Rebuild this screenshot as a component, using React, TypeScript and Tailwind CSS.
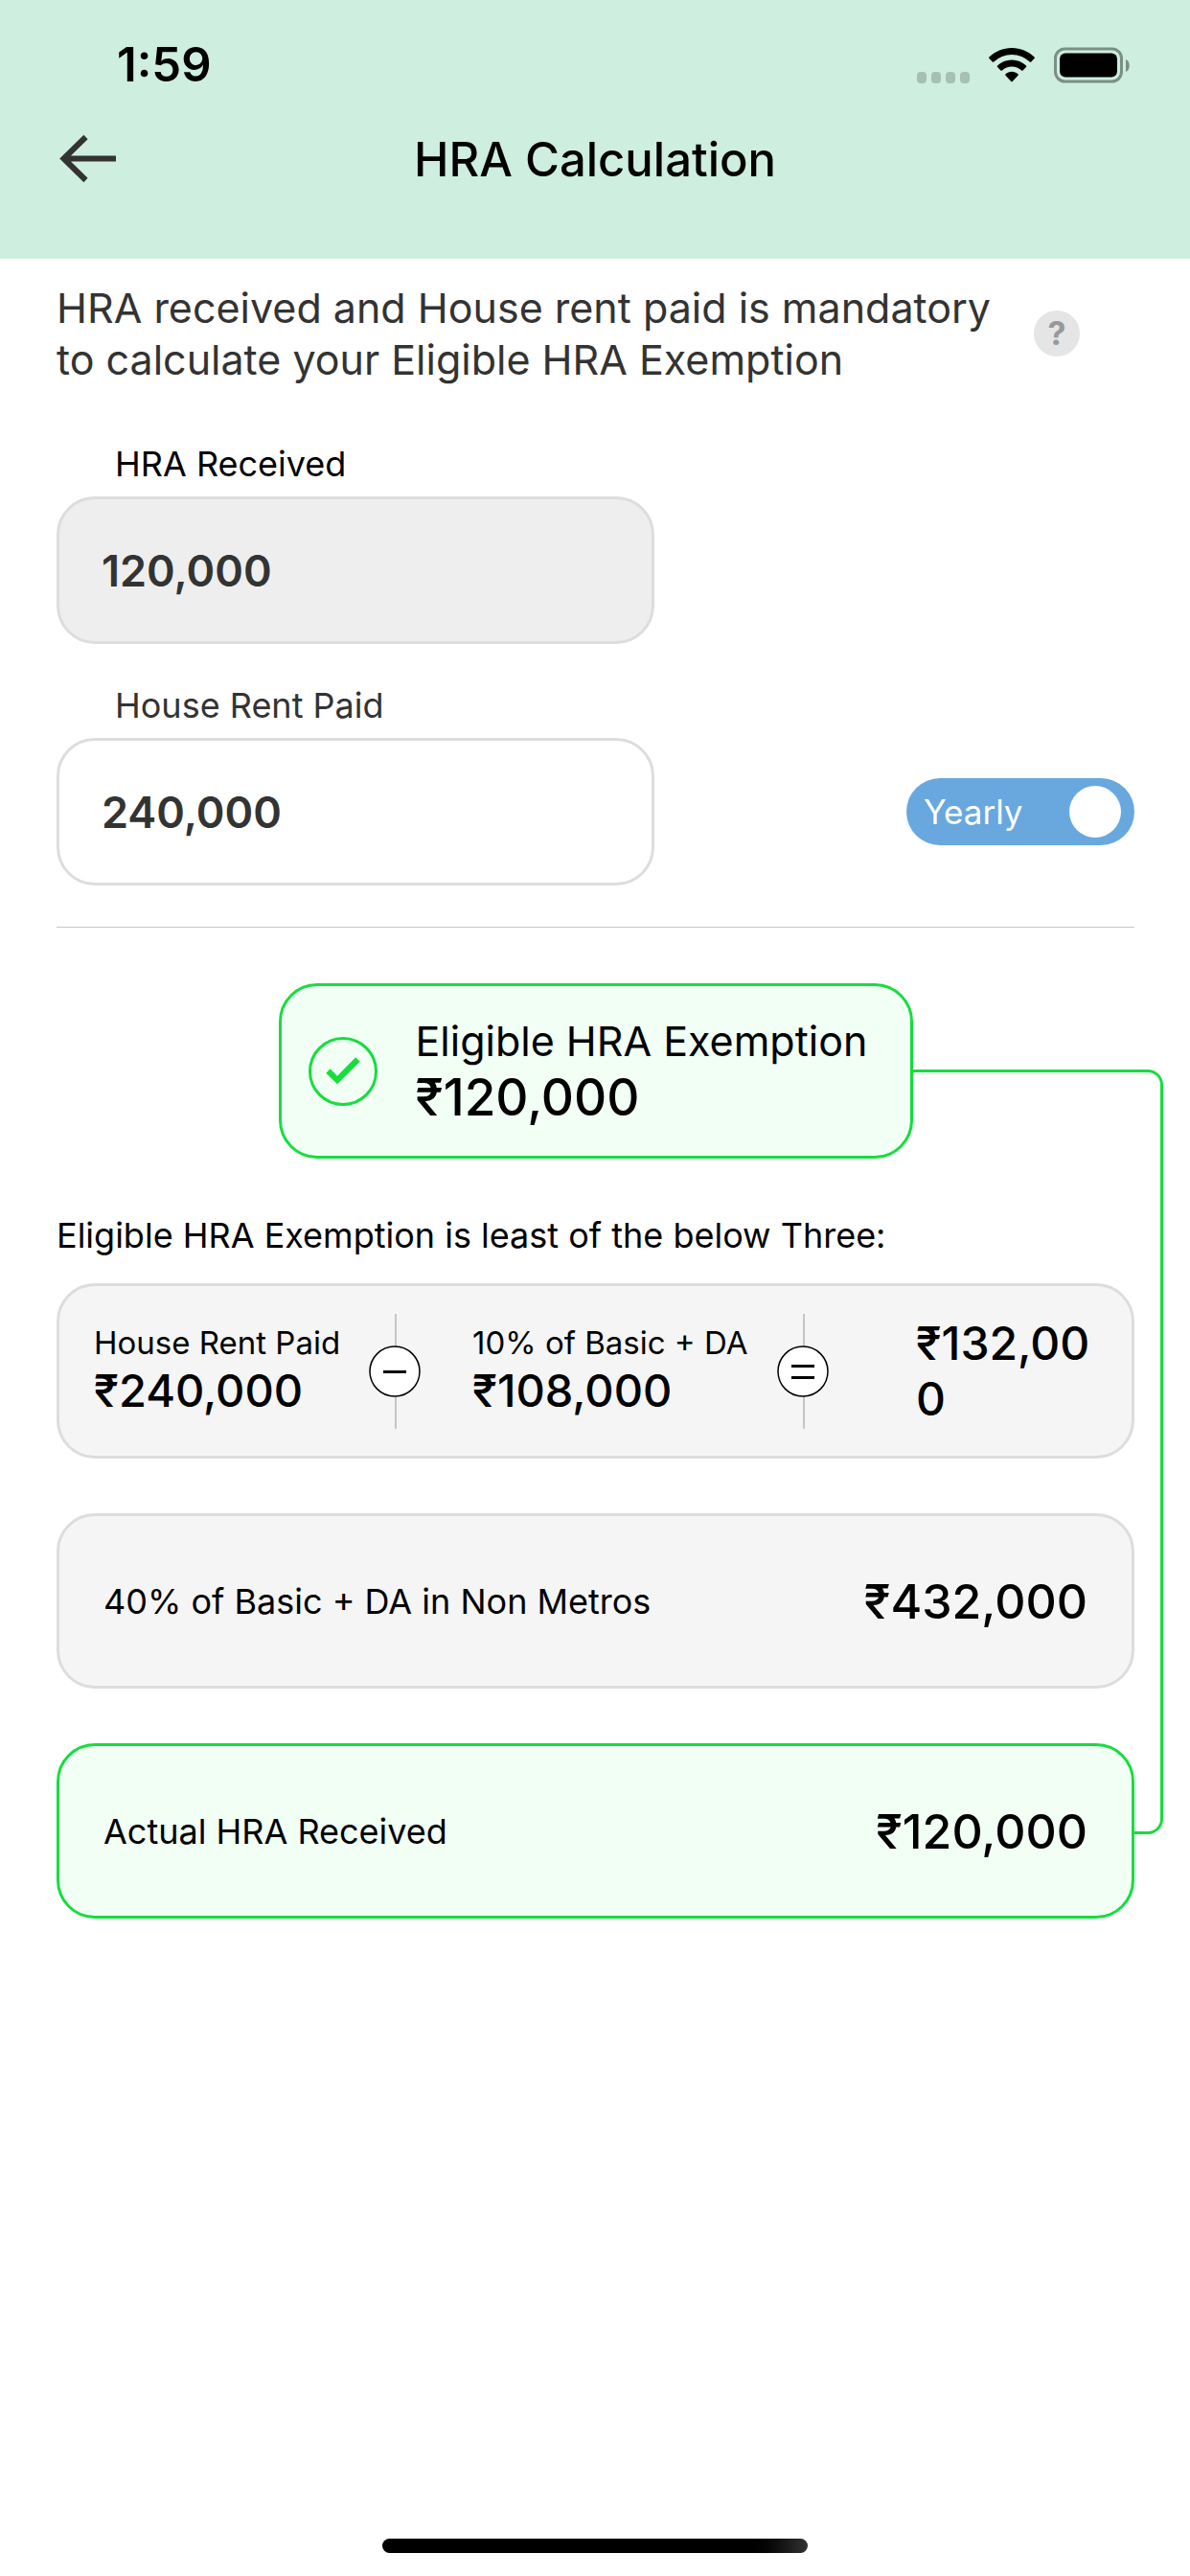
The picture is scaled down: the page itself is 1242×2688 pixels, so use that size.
import { useState } from "react";
import type { ReactNode } from "react";

function StatusBar() {
  return (
    <div className="flex h-[132px] items-center justify-between pl-[122px] pr-[62px] pt-[4px]">
      <time className="text-[49px] font-semibold leading-[58px]">1:59</time>
      <div className="flex items-center" aria-hidden="true">
        <div className="mt-[26px] flex gap-[5px]">
          <span className="h-3 w-[10px] rounded-[4px] bg-[#a6c0b3]" />
          <span className="h-3 w-[10px] rounded-[4px] bg-[#a6c0b3]" />
          <span className="h-3 w-[10px] rounded-[4px] bg-[#a6c0b3]" />
          <span className="h-3 w-[10px] rounded-[4px] bg-[#a6c0b3]" />
        </div>
        <svg className="ml-5 h-9 w-12" viewBox="0 0 48 36">
          <path d="M24 0C33 0 41.500 3.700 47.600 9.600Q48.200 10.300 47.600 11L44.200 14.600Q43.500 15.300 42.800 14.600A27 27 0 0 0 5.200 14.600Q4.500 15.300 3.800 14.600L0.400 11Q-0.200 10.300 0.400 9.600C6.500 3.700 15 0 24 0Z" />
          <path d="M24 12.500C29.800 12.500 35 14.800 39 18.600Q39.600 19.300 39 20L35.500 23.500Q34.800 24.200 34.100 23.500A15 15 0 0 0 13.900 23.500Q13.200 24.200 12.500 23.500L9 20Q8.400 19.300 9 18.600C13 14.800 18.200 12.500 24 12.500Z" />
          <path d="M24 24.800C26.500 24.800 28.700 25.700 30.500 27.200Q31.200 28 30.500 28.800L24.700 35Q24 35.800 23.300 35L17.500 28.800Q16.800 28 17.500 27.200C19.300 25.700 21.500 24.800 24 24.800Z" />
        </svg>
        <svg className="ml-5 h-[38px] w-20" viewBox="0 0 80 38">
          <rect x="1.500" y="2" width="69" height="34" rx="10" fill="none" stroke="#7b8f86" strokeWidth="3" />
          <rect x="6" y="6.500" width="60" height="25" rx="6" />
          <path d="M75 13C80 15 80 24 75 26Z" fill="#7b8f86" />
        </svg>
      </div>
    </div>
  );
}

function AmountField({
  id,
  label,
  labelTone,
  tone,
  value,
  readOnly,
  onChange,
}: {
  id: string;
  label: string;
  labelTone: string;
  tone: string;
  value: string;
  readOnly?: boolean;
  onChange?: (value: string) => void;
}) {
  return (
    <div className="flex w-[624px] flex-col gap-3">
      <label htmlFor={id} className={`pl-[61px] text-[36px] leading-[44px] ${labelTone}`}>
        {label}
      </label>
      <input
        id={id}
        type="text"
        inputMode="numeric"
        value={value}
        readOnly={readOnly}
        onChange={(e) => onChange?.(e.target.value)}
        className={`h-[154px] w-full rounded-[40px] border-[3px] border-[#dddddd] px-11 text-[45px] font-semibold text-[#333333] outline-none ${tone}`}
      />
    </div>
  );
}

function Operator({ children }: { children: ReactNode }) {
  return (
    <div className="relative flex h-[120px] w-[54px] items-center justify-center">
      <span className="absolute inset-y-0 left-[27px] w-[2px] bg-[#c6c6c6]" />
      <svg className="relative h-[54px] w-[54px]" viewBox="0 0 54 54" stroke="#000">
        <circle cx="27" cy="27" r="26" fill="#fff" strokeWidth="1.500" />
        {children}
      </svg>
    </div>
  );
}

function Term({ label, amount }: { label: string; amount: string }) {
  return (
    <div className="whitespace-nowrap pb-[3px]">
      <p className="text-[33px] leading-[44px]">{label}</p>
      <p className="text-[47px] font-medium leading-[56px]">{amount}</p>
    </div>
  );
}

function ResultRow({ label, amount, tone }: { label: string; amount: string; tone: string }) {
  return (
    <div className={`relative flex h-[183px] items-center justify-between rounded-[40px] border-[3px] px-[46px] ${tone}`}>
      <p className="text-[36px] leading-[44px]">{label}</p>
      <p className="text-[50px] font-medium leading-[60px]">{amount}</p>
    </div>
  );
}

export default function App() {
  const [rent, setRent] = useState("240,000");
  const [yearly, setYearly] = useState(true);

  return (
    <div className="flex min-h-screen flex-col bg-white font-['Inter','Noto_Sans',sans-serif] text-black">
      <header className="bg-[#ceeedf] pb-[68px]">
        <StatusBar />
        <div className="grid grid-cols-[1fr_auto_1fr] items-center px-[60px]">
          <button type="button" aria-label="Back" className="flex h-[70px] w-[70px] items-center">
            <svg className="h-[58px] w-16" viewBox="0 0 64 58" fill="none" stroke="#333" strokeWidth="6">
              <path d="M61 27.500H7M29.500 5L6.500 27.500L29.500 50" />
            </svg>
          </button>
          <h1 className="text-[49px] font-medium leading-[70px]">HRA Calculation</h1>
        </div>
      </header>

      <main className="pl-[59px] pr-[58px] pt-6">
        <div className="flex items-center gap-9">
          <p className="w-[984px] text-[43px] leading-[54px] text-[#333333]">
            HRA received and House rent paid is mandatory to calculate your Eligible HRA Exemption
          </p>
          <button
            type="button"
            aria-label="Help"
            className="flex h-12 w-12 shrink-0 items-center justify-center rounded-full bg-[#e5e5e5] text-[34px] font-bold leading-none text-[#999999]"
          >
            ?
          </button>
        </div>

        <div className="mt-[60px] flex flex-col gap-[42px]">
          <AmountField id="hra" label="HRA Received" labelTone="text-black" tone="bg-[#eeeeee]" value="120,000" readOnly />
          <div className="flex items-end justify-between">
            <AmountField
              id="rent"
              label="House Rent Paid"
              labelTone="text-[#333333]"
              tone="bg-white"
              value={rent}
              onChange={setRent}
            />
            <button
              type="button"
              role="switch"
              aria-checked={yearly}
              onClick={() => setYearly(!yearly)}
              className="mb-[42px] flex h-[70px] w-[238px] items-center justify-between rounded-full bg-[#68a8df] pl-[18px] pr-[14px] text-[35px] leading-[44px] text-white"
            >
              {yearly ? "Yearly" : "Monthly"}
              <span className="h-[54px] w-[54px] rounded-full bg-white" />
            </button>
          </div>
        </div>

        <hr className="mt-[43px] border-t border-[#c6c6c6]" />

        <section className="relative mt-[58px]">
          <div
            aria-hidden="true"
            className="absolute -right-[30px] bottom-[88px] left-1/2 top-[90px] rounded-r-[16px] border-[3px] border-l-0 border-[#17dd3d]"
          />
          <div className="relative mx-auto flex h-[183px] w-[662px] items-center gap-10 rounded-[40px] border-[3px] border-[#17dd3d] bg-[#f1fff5] pl-7">
            <svg className="h-[72px] w-[72px] shrink-0" viewBox="0 0 72 72">
              <circle cx="36" cy="36" r="34.500" fill="none" stroke="#17dd3d" strokeWidth="3" />
              <path d="M18.300 37.700L22.700 33.300L30 40.700L49.200 21.300L53.700 25.700L30 49.300Z" fill="#17dd3d" />
            </svg>
            <div className="whitespace-nowrap">
              <p className="text-[43px] leading-[54px]">Eligible HRA Exemption</p>
              <p className="text-[53px] font-medium leading-[64px]">₹120,000</p>
            </div>
          </div>

          <h2 className="mt-[58px] text-[36px] leading-[44px]">Eligible HRA Exemption is least of the below Three:</h2>

          <div className="mt-[28px] flex flex-col gap-[57px]">
            <div className="relative grid h-[183px] grid-cols-[287fr_108px_318fr_145px_190px] items-center rounded-[40px] border-[3px] border-[#dddddd] bg-[#f5f5f5] pl-9 pr-[35px]">
              <Term label="House Rent Paid" amount="₹240,000" />
              <Operator>
                <path d="M15 27.500H39" strokeWidth="3" />
              </Operator>
              <Term label="10% of Basic + DA" amount="₹108,000" />
              <Operator>
                <path d="M15 21.500H39M15 33.500H39" strokeWidth="3" />
              </Operator>
              <p className="break-all text-[48px] font-medium leading-[58px]">₹132,000</p>
            </div>
            <ResultRow label="40% of Basic + DA in Non Metros" amount="₹432,000" tone="border-[#dddddd] bg-[#f5f5f5]" />
            <ResultRow label="Actual HRA Received" amount="₹120,000" tone="border-[#17dd3d] bg-[#f1fff5]" />
          </div>
        </section>
      </main>

      <div className="mx-auto mb-6 mt-auto h-[15px] w-[444px] rounded-full bg-linear-to-r from-black from-85% to-[#333333]" />
    </div>
  );
}
